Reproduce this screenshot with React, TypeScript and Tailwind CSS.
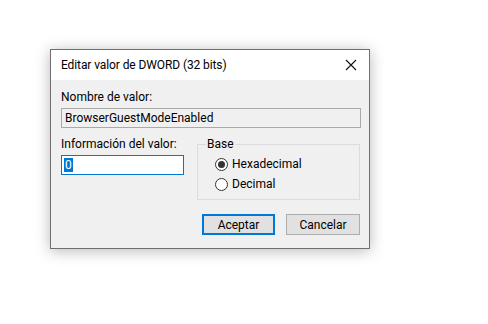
import React, { useState } from "react";

const font = { fontFamily: "Roboto, 'Liberation Sans', sans-serif" };

const Radio = ({ checked, label, onClick }: { checked: boolean; label: string; onClick: () => void }) => (
  <button type="button" onClick={onClick} className="flex h-[20px] items-center gap-[4px] text-[12px] text-black">
    <span className="flex h-[13px] w-[13px] items-center justify-center rounded-full border border-[#333333] bg-white">
      {checked && <span className="h-[7px] w-[7px] rounded-full bg-[#333333]" />}
    </span>
    {label}
  </button>
);

export default function App() {
  const [base, setBase] = useState<"hex" | "dec">("hex");

  return (
    <div className="h-[324px] w-[488px] overflow-hidden bg-white pl-[50px] pt-[49px]" style={font}>
      <div className="w-[320px] border border-[#6f6f6f] shadow-[0_2px_14px_rgba(0,0,0,0.28)]">
        {/* barra de título */}
        <div className="flex h-[30px] items-center justify-between bg-white pl-[10px] pr-[9px]">
          <span className="text-[12px] tracking-[-0.1px] text-black">Editar valor de DWORD (32 bits)</span>
          <svg width="12" height="12" viewBox="0 0 12 12" className="mr-[3px]">
            <path d="M1 1 L11 11 M11 1 L1 11" stroke="#111" strokeWidth="1.1" />
          </svg>
        </div>

        <div className="bg-[#f0f0f0] pb-[13px] pl-[10px] pr-[8px] pt-[9px]">
          <div className="h-[16px] text-[12px] leading-[16px] text-black">Nombre de valor:</div>
          <div className="mt-[3px] flex h-[20px] items-center border border-[#a9a9a9] bg-[#f0f0f0] px-[3px] text-[12px] text-black">
            BrowserGuestModeEnabled
          </div>

          <div className="mt-[8px] flex">
            <div className="w-[136px]">
              <div className="h-[16px] text-[12px] leading-[16px] text-black">Información del valor:</div>
              <div className="mt-[3px] flex h-[20px] w-[123px] items-center border border-[#0078d7] bg-white pl-[2px]">
                <span className="bg-[#0078d7] px-[1px] text-[12px] leading-[14px] text-white">0</span>
              </div>
            </div>
            <div className="relative mt-[8px] h-[56px] w-[163px] border border-[#dcdcdc]">
              <span className="absolute -top-[9px] left-[8px] bg-[#f0f0f0] px-[1px] text-[12px] leading-[16px] text-black">
                Base
              </span>
              <div className="flex flex-col pl-[17px] pt-[9px]">
                <Radio checked={base === "hex"} label="Hexadecimal" onClick={() => setBase("hex")} />
                <Radio checked={base === "dec"} label="Decimal" onClick={() => setBase("dec")} />
              </div>
            </div>
          </div>

          <div className="mt-[14px] flex justify-end gap-[11px] pr-[1px]">
            <button
              type="button"
              className="h-[21px] w-[73px] border-2 border-[#0078d7] bg-[#e1e1e1] text-[12px] text-black"
            >
              Aceptar
            </button>
            <button
              type="button"
              className="h-[21px] w-[74px] border border-[#adadad] bg-[#e1e1e1] text-[12px] text-black"
            >
              Cancelar
            </button>
          </div>
        </div>
      </div>
    </div>
  );
}
